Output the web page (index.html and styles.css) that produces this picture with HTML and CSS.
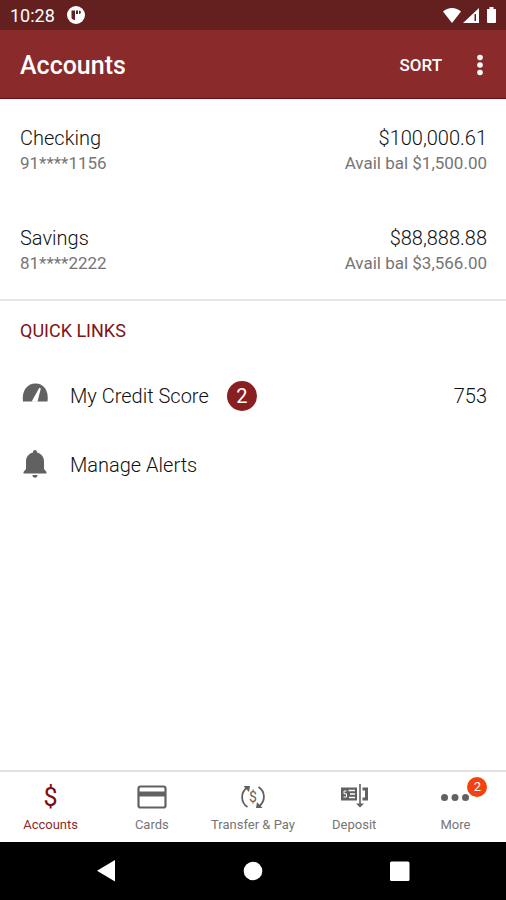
FILE: index.html
```html
<!DOCTYPE html>
<html lang="en">
<head>
    <meta charset="UTF-8">
    <meta name="viewport" content="width=device-width, initial-scale=1.0">
    <title>Accounts</title>
    <link rel="stylesheet" href="styles.css">
</head>
<body>

    <div class="status-bar">
        <span class="time">10:28</span>
        <svg class="status-app" width="18" height="18" viewBox="0 0 18 18">
            <circle cx="9" cy="9" r="9" fill="#fff"/>
            <path d="M4.500 4.500h3.500v9.500c-2 0-3.500-1-3.500-2.500z" fill="#63201f"/>
            <path d="M9 4.500h2v3.500H9zM12 4.500c2.500 0 2.500 3.500 0 3.500z" fill="#63201f"/>
        </svg>
        <svg class="status-icons" width="56" height="18" viewBox="0 0 56 18">
            <path d="M1 5.500C6 .7 14 .7 19 5.500L10 17z" fill="#fff"/>
            <path d="M37 2v15H21z" fill="#fff"/>
            <path d="M32.500 8H34v7h-1.500z" fill="#63201f"/>
            <path d="M45 3h2.500V1h4v2H54v13a1 1 0 0 1-1 1h-7a1 1 0 0 1-1-1z" fill="#fff"/>
        </svg>
    </div>

    <header class="app-bar">
        <h1>Accounts</h1>
        <button class="sort-btn" type="button">SORT</button>
        <button class="menu-btn" type="button" aria-label="More options">
            <svg width="8" height="22" viewBox="0 0 8 22" fill="#fff">
                <circle cx="4" cy="3.500" r="2.800"/>
                <circle cx="4" cy="11" r="2.800"/>
                <circle cx="4" cy="18.500" r="2.800"/>
            </svg>
        </button>
    </header>

    <main>
        <section class="accounts">
            <div class="account">
                <div class="account-info">
                    <div class="account-main">Checking</div>
                    <div class="account-sub">91****1156</div>
                </div>
                <div class="account-balance">
                    <div class="account-main">$100,000.61</div>
                    <div class="account-sub">Avail bal $1,500.00</div>
                </div>
            </div>
            <div class="account">
                <div class="account-info">
                    <div class="account-main">Savings</div>
                    <div class="account-sub">81****2222</div>
                </div>
                <div class="account-balance">
                    <div class="account-main">$88,888.88</div>
                    <div class="account-sub">Avail bal $3,566.00</div>
                </div>
            </div>
        </section>

        <section class="quick-links">
            <h2>QUICK LINKS</h2>
            <a class="quick-link" href="#credit-score">
                <svg class="link-icon" width="30" height="30" viewBox="0 0 30 30">
                    <path d="M3 20.500C1.500 10 7 2.500 15.500 2.500S29 10 27.500 20.500z" fill="#616161"/>
                    <path d="M11.500 20.800L19.300 6.800l1.500.6-3.300 13.400z" fill="#fff"/>
                </svg>
                <span>My Credit Score</span>
                <span class="count">2</span>
                <span class="score">753</span>
            </a>
            <a class="quick-link" href="#alerts">
                <svg class="link-icon" width="30" height="30" viewBox="0 0 30 30" fill="#616161">
                    <path d="M15 0c1.300 0 2 1 2 2.500 4.500 1.200 7 4.500 7 9V19l2.500 3v1.500h-23V22L6 19v-7.500c0-4.500 2.500-7.800 7-9C13 1 13.700 0 15 0z"/>
                    <path d="M12.500 25h5c0 1.800-1 2.700-2.500 2.700s-2.500-.9-2.500-2.700z"/>
                </svg>
                <span>Manage Alerts</span>
            </a>
        </section>
    </main>

    <nav class="tabs">
        <a class="tab active" href="#accounts">
            <span class="tab-icon dollar">$</span>
            <span>Accounts</span>
        </a>
        <a class="tab" href="#cards">
            <svg class="tab-icon" width="32" height="28" viewBox="0 0 32 28">
                <rect x="2.500" y="3.500" width="27" height="21" rx="2" fill="none" stroke="#616161" stroke-width="2.200"/>
                <path d="M2 8.500h28v5H2z" fill="#616161"/>
            </svg>
            <span>Cards</span>
        </a>
        <a class="tab" href="#transfer">
            <svg class="tab-icon" width="32" height="28" viewBox="0 0 32 28">
                <path d="M10.500 24C3.500 19.500 3.500 10 9.500 5M21.500 4c7 4.500 7 14 1 19" fill="none" stroke="#616161" stroke-width="1.800"/>
                <path d="M6.500 3h6.500l-1 6zM25.500 25H19l1-6z" fill="#616161"/>
                <text x="16" y="19" text-anchor="middle" font-size="14" fill="#616161">$</text>
            </svg>
            <span>Transfer &amp; Pay</span>
        </a>
        <a class="tab" href="#deposit">
            <svg class="tab-icon" width="32" height="28" viewBox="0 0 32 28">
                <path d="M3 4.500h16v13H3z" fill="#616161"/>
                <path d="M10.500 7.500H17M11 14.500h6M12 11h5" stroke="#fff" stroke-width="1.300"/>
                <path d="M8.500 8H6v2.800h2.500V14h-3" fill="none" stroke="#fff" stroke-width="1"/>
                <path d="M24.500 4.500H30v13h-5.500v-3H27v-7h-2.500z" fill="#616161"/>
                <path d="M22 1v21" stroke="#616161" stroke-width="1.600"/>
                <path d="M18 20.500h8l-4 4z" fill="#616161"/>
            </svg>
            <span>Deposit</span>
        </a>
        <a class="tab" href="#more">
            <svg class="tab-icon" width="32" height="28" viewBox="0 0 32 28" fill="#616161">
                <circle cx="5.500" cy="14.500" r="3.500"/>
                <circle cx="16" cy="14.500" r="3.500"/>
                <circle cx="26.500" cy="14.500" r="3.500"/>
            </svg>
            <span>More</span>
            <span class="tab-badge">2</span>
        </a>
    </nav>

    <div class="system-nav">
        <button type="button" aria-label="Back">
            <svg width="22" height="22" viewBox="0 0 22 22"><path d="M20 0v21.500L2 10.700z" fill="#fff"/></svg>
        </button>
        <button type="button" aria-label="Home">
            <svg width="22" height="22" viewBox="0 0 22 22"><circle cx="11" cy="11" r="9.300" fill="#fff"/></svg>
        </button>
        <button type="button" aria-label="Recent apps">
            <svg width="22" height="22" viewBox="0 0 22 22"><rect x="1" y="1.500" width="19.500" height="19.500" rx="1.500" fill="#fff"/></svg>
        </button>
    </div>

</body>
</html>
```

FILE: styles.css
```css
* {
    box-sizing: border-box;
}

body {
    margin: 0;
    min-height: 100vh;
    display: flex;
    flex-direction: column;
    font-family: Roboto, sans-serif;
    background-color: #fff;
    color: #111;
}

a {
    color: inherit;
    text-decoration: none;
}

button {
    padding: 0;
    border: none;
    background: none;
    font-family: inherit;
    color: #fff;
    cursor: pointer;
}

svg {
    display: block;
}

/* Status bar */
.status-bar {
    display: flex;
    align-items: center;
    height: 30px;
    padding: 0 8px 0 10px;
    background-color: #63201f;
    color: #fff;
}

.time {
    font-size: 18px;
    line-height: 30px;
    padding-top: 2px;
}

.status-app {
    margin-left: 12px;
}

.status-icons {
    margin-left: auto;
}

/* App bar */
.app-bar {
    display: flex;
    align-items: center;
    height: 69px;
    padding: 2px 20px 0;
    background-color: #8a2a2b;
    border-bottom: 1px solid #6d0c0e;
    color: #fff;
}

.app-bar h1 {
    flex: 1;
    margin: 0;
    font-size: 25px;
    font-weight: 500;
}

.sort-btn {
    font-size: 17px;
    font-weight: 500;
}

.menu-btn {
    margin-left: 34px;
    padding-right: 2px;
}

main {
    flex: 1;
}

/* Accounts */
.accounts {
    border-bottom: 2px solid #e6e6e6;
}

.account {
    display: flex;
    justify-content: space-between;
    padding: 26px 19px 24px 20px;
}

.account-balance {
    text-align: right;
}

.account-main {
    font-size: 20px;
    line-height: 26px;
    font-weight: 300;
}

.account-sub {
    font-size: 17px;
    line-height: 24px;
    color: #757575;
}

/* Quick links */
.quick-links {
    padding: 18px 19px 18px 20px;
}

.quick-links h2 {
    margin: 0 0 18px;
    font-size: 18px;
    line-height: 24px;
    font-weight: 400;
    color: #7d1416;
}

.quick-link {
    display: flex;
    align-items: center;
    height: 69px;
    font-size: 20px;
    font-weight: 300;
}

.link-icon {
    margin-right: 20px;
}

.count {
    width: 30px;
    height: 30px;
    margin-left: 18px;
    border-radius: 50%;
    background-color: #8a1f21;
    color: #fff;
    font-weight: 400;
    line-height: 30px;
    text-align: center;
}

.score {
    margin-left: auto;
}

/* Bottom tabs */
.tabs {
    display: flex;
    height: 72px;
    border-top: 2px solid #e0e0e0;
}

.tab {
    position: relative;
    flex: 1;
    display: flex;
    flex-direction: column;
    align-items: center;
    padding-top: 11px;
    font-size: 13px;
    line-height: 18px;
    color: #757575;
}

.tab.active {
    color: #8a2a2b;
}

.tab-icon {
    height: 28px;
    margin-bottom: 5px;
}

.dollar {
    font-size: 25px;
    line-height: 30px;
    color: #7d0c0e;
}

.tab-badge {
    position: absolute;
    top: 5px;
    left: calc(50% + 12px);
    width: 20px;
    height: 20px;
    border-radius: 50%;
    background-color: #f4420f;
    color: #fff;
    line-height: 20px;
    text-align: center;
}

/* System navigation */
.system-nav {
    display: flex;
    height: 58px;
    padding: 0 33px;
    background-color: #000;
}

.system-nav button {
    flex: 1;
    display: flex;
    align-items: center;
    justify-content: center;
}
```
